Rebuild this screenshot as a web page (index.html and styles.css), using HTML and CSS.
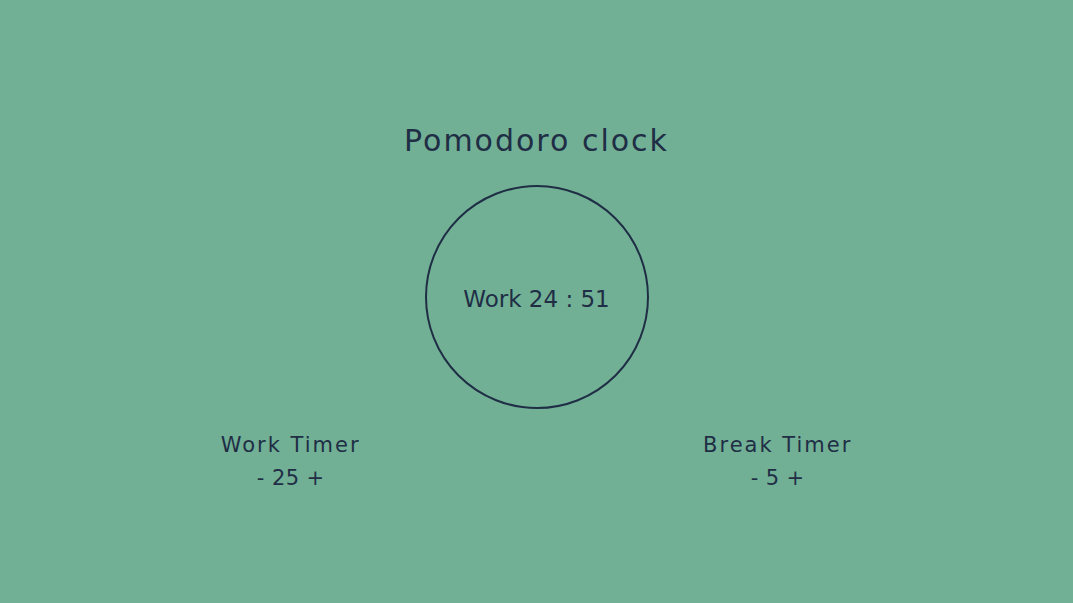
FILE: index.html
```html
<!DOCTYPE html>
<html lang="en">
<head>
<meta charset="UTF-8">
<meta name="viewport" content="width=device-width, initial-scale=1.0">
<title>Pomodoro clock</title>
<link rel="stylesheet" href="styles.css">
</head>
<body>

<div id="app">
    <h1 id="title">Pomodoro clock</h1>

    <div id="clock">
        <span id="display">Work 24 : 51</span>
    </div>

    <div id="timers">
        <div class="timer">
            <div class="timer-name">Work Timer</div>
            <div class="timer-controls">
                <span class="btn">-</span>
                <span class="value">25</span>
                <span class="btn">+</span>
            </div>
        </div>
        <div class="timer">
            <div class="timer-name">Break Timer</div>
            <div class="timer-controls">
                <span class="btn">-</span>
                <span class="value">5</span>
                <span class="btn">+</span>
            </div>
        </div>
    </div>
</div>

</body>
</html>
```

FILE: styles.css
```css
body {
    font-family: "DejaVu Sans", sans-serif;
    margin: 0;
    padding: 0;
    background-color: #71b095;
    color: #1f2e45;
}
#app {
    padding-top: 122px;
    text-align: center;
}
#title {
    font-size: 30px;
    font-weight: normal;
    letter-spacing: 2px;
    line-height: 38px;
    margin: 0;
}
#clock {
    width: 220px;
    height: 220px;
    border: 2px solid #1f2e45;
    border-radius: 50%;
    margin: 25px auto 0;
    display: flex;
    justify-content: center;
    align-items: center;
}
#display {
    font-size: 23px;
    margin-top: 4px;
}
#timers {
    width: 974px;
    margin: 21px auto 0;
    display: flex;
    justify-content: space-around;
}
.timer-name {
    font-size: 21px;
    letter-spacing: 2px;
    line-height: 30px;
}
.timer-controls {
    font-size: 21px;
    letter-spacing: 0.4px;
    line-height: 30px;
    margin-top: 3px;
}
.btn {
    cursor: pointer;
}
```
